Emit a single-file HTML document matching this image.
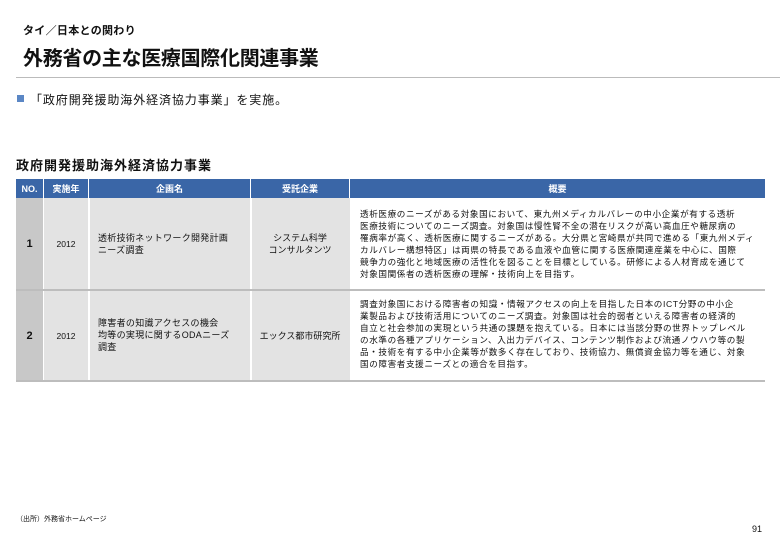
<!DOCTYPE html>
<html><head><meta charset="utf-8"><style>
body{margin:0;width:780px;height:540px;background:#fff;position:relative;font-family:"Liberation Sans","Noto Sans CJK JP",sans-serif;color:#111;overflow:hidden}
.a{position:absolute;white-space:nowrap}
.c{position:absolute;display:flex;align-items:center;justify-content:center;text-align:center}
.s{position:absolute;font-size:8.6px;line-height:12px;white-space:nowrap;letter-spacing:0.6px}
</style></head><body>
<div class="a" style="left:23px;top:22px;font-size:11px;font-weight:bold;letter-spacing:0.3px">タイ／日本との関わり</div>
<div class="a" style="left:23px;top:42px;font-size:20px;font-weight:bold;letter-spacing:-0.3px">外務省の主な医療国際化関連事業</div>
<div class="a" style="left:16px;top:77px;width:764px;height:1px;background:#bbb"></div>
<div class="a" style="left:17px;top:95px;width:7px;height:7px;background:#5b87c5"></div>
<div class="a" style="left:30px;top:91px;font-size:12px;letter-spacing:0.9px">「政府開発援助海外経済協力事業」を実施。</div>
<div class="a" style="left:16px;top:155px;font-size:13px;font-weight:bold;letter-spacing:1px">政府開発援助海外経済協力事業</div>
<div class="a" style="left:16px;top:179px;width:749px;height:19px;background:#3a66a7"></div>
<div class="c" style="left:16px;top:179px;width:27px;height:19px;color:#fff;font-size:9px;font-weight:bold">NO.</div>
<div class="c" style="left:44px;top:179px;width:44px;height:19px;color:#fff;font-size:9px;font-weight:bold">実施年</div>
<div class="c" style="left:89px;top:179px;width:161px;height:19px;color:#fff;font-size:9px;font-weight:bold">企画名</div>
<div class="c" style="left:251px;top:179px;width:98px;height:19px;color:#fff;font-size:9px;font-weight:bold">受託企業</div>
<div class="c" style="left:350px;top:179px;width:415px;height:19px;color:#fff;font-size:9px;font-weight:bold">概要</div>
<div class="a" style="left:43px;top:179px;width:1px;height:19px;background:#fff"></div>
<div class="a" style="left:88px;top:179px;width:1px;height:19px;background:#fff"></div>
<div class="a" style="left:250px;top:179px;width:1px;height:19px;background:#fff"></div>
<div class="a" style="left:349px;top:179px;width:1px;height:19px;background:#fff"></div>
<div class="a" style="left:16px;top:198px;width:27px;height:182px;background:#c8c8c8"></div>
<div class="a" style="left:44px;top:198px;width:306px;height:182px;background:#e3e3e3"></div>
<div class="a" style="left:88px;top:198px;width:2px;height:182px;background:#fff"></div>
<div class="a" style="left:250px;top:198px;width:2px;height:182px;background:#fff"></div>
<div class="a" style="left:16px;top:289px;width:749px;height:2px;background:#bdbdbd"></div>
<div class="a" style="left:16px;top:380px;width:749px;height:2px;background:#bdbdbd"></div>
<div class="c" style="left:16px;top:198px;width:27px;height:91px;font-size:11px;font-weight:bold">1</div>
<div class="c" style="left:44px;top:198px;width:44px;height:91px;font-size:8.5px">2012</div>
<div class="a" style="left:98px;top:232px;font-size:9px;line-height:12px;letter-spacing:0.3px">透析技術ネットワーク開発計画<br>ニーズ調査</div>
<div class="c" style="left:251px;top:198px;width:98px;height:91px;font-size:9px;line-height:12px">システム科学<br>コンサルタンツ</div>
<div class="s" style="left:360px;top:208px">透析医療のニーズがある対象国において、東九州メディカルバレーの中小企業が有する透析<br>医療技術についてのニーズ調査。対象国は慢性腎不全の潜在リスクが高い高血圧や糖尿病の<br>罹病率が高く、透析医療に関するニーズがある。大分県と宮崎県が共同で進める「東九州メディ<br>カルバレー構想特区」は両県の特長である血液や血管に関する医療関連産業を中心に、国際<br>競争力の強化と地域医療の活性化を図ることを目標としている。研修による人材育成を通じて<br>対象国関係者の透析医療の理解・技術向上を目指す。</div>
<div class="c" style="left:16px;top:291px;width:27px;height:89px;font-size:11px;font-weight:bold">2</div>
<div class="c" style="left:44px;top:291px;width:44px;height:89px;font-size:8.5px">2012</div>
<div class="a" style="left:98px;top:317px;font-size:9px;line-height:12px;letter-spacing:0.3px">障害者の知識アクセスの機会<br>均等の実現に関するODAニーズ<br>調査</div>
<div class="c" style="left:251px;top:291px;width:98px;height:89px;font-size:9px">エックス都市研究所</div>
<div class="s" style="left:360px;top:298px">調査対象国における障害者の知識・情報アクセスの向上を目指した日本のICT分野の中小企<br>業製品および技術活用についてのニーズ調査。対象国は社会的弱者といえる障害者の経済的<br>自立と社会参加の実現という共通の課題を抱えている。日本には当該分野の世界トップレベル<br>の水準の各種アプリケーション、入出力デバイス、コンテンツ制作および流通ノウハウ等の製<br>品・技術を有する中小企業等が数多く存在しており、技術協力、無償資金協力等を通じ、対象<br>国の障害者支援ニーズとの適合を目指す。</div>
<div class="a" style="left:16px;top:514px;font-size:7px">（出所）外務省ホームページ</div>
<div class="a" style="left:752px;top:524px;font-size:9px">91</div>
</body></html>
